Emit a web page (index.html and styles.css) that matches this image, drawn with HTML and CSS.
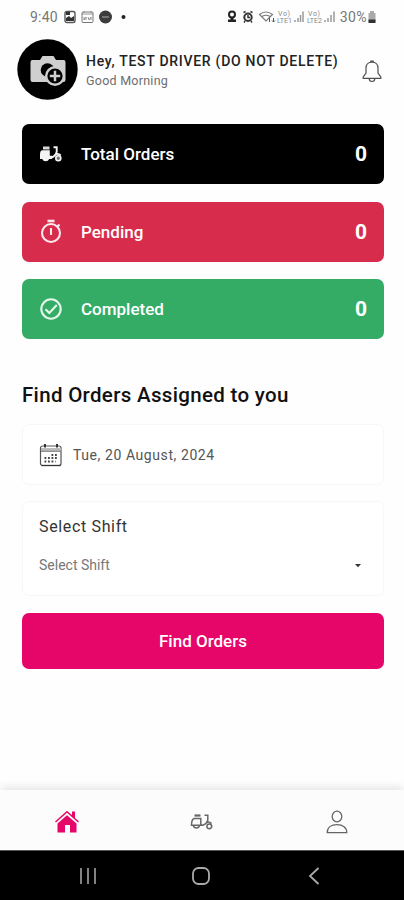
FILE: index.html
```html
<!DOCTYPE html>
<html lang="en">
<head>
<meta charset="utf-8">
<meta name="viewport" content="width=device-width, initial-scale=1">
<title>Driver Orders</title>
<link rel="stylesheet" href="styles.css">
</head>
<body>
<div class="phone">
  <div class="status">
    <span class="clock">9:40</span>
    <svg class="status-left" width="66" height="16" viewBox="0 0 66 16">
      <rect x="1" y="2.500" width="10" height="11" rx="2" fill="none" stroke="#555" stroke-width="1.400"/>
      <path d="M2 12V9l3-2 2 2 3-2v5zM2 3h4v3H2z" fill="#333"/>
      <rect x="18" y="3" width="11" height="10.500" rx="1" fill="none" stroke="#777"/>
      <path d="M18 5h11M20 8v3l2-3v3M24 8l1 3 2-3v3M20 2v2M27 2v2" fill="none" stroke="#888" stroke-width=".9"/>
      <circle cx="41.500" cy="8" r="6.500" fill="#3c3c3c"/>
      <path d="M38 8h7" stroke="#888" stroke-width="1.500"/>
      <circle cx="59.500" cy="8" r="2" fill="#222"/>
    </svg>
    <div class="status-right">
      <svg width="110" height="18" viewBox="0 0 110 18">
        <circle cx="5" cy="6.500" r="3" fill="none" stroke="#222" stroke-width="2"/>
        <path d="M1 11.500h8v2.500H1zM3.500 9.500h3v3h-3z" fill="#222"/>
        <circle cx="21" cy="9.200" r="3.700" fill="none" stroke="#333" stroke-width="2"/>
        <path d="M16.500 4.500l2-1M25.500 4.500l-2-1M18 13l-1 1.500M24 13l1 1.500M21 7v2.500h2" fill="none" stroke="#333" stroke-width="1.500"/>
        <path d="M32.500 6.500q6.500-5 13 0l-6.500 6.500zM35 8.500q4-2.500 8 0" fill="none" stroke="#777" stroke-width="1.100"/>
        <path d="M42.500 10v4M46.500 10v4M45 12.500l1.500 1.500 1.500-1.500" fill="none" stroke="#555"/>
        <g class="volte"><text x="51" y="8" textLength="12">Vo)</text><text x="50" y="15" textLength="15" lengthAdjust="spacingAndGlyphs">LTE1</text><text x="81" y="8" textLength="12">Vo)</text><text x="80" y="15" textLength="15" lengthAdjust="spacingAndGlyphs">LTE2</text></g>
        <path d="M68 12v2M71 10v4M73.500 7v7M76 3.500V14M98 12v2M101 10v4M104 7v7M107 3.500V14" stroke="#999" stroke-width="1.500"/>
      </svg>
      <span class="battery">30%</span>
      <svg width="10" height="14" viewBox="0 0 10 14"><path d="M3 1h4v2h1.500v9h-7V3H3z" fill="#aaa"/><path d="M1.500 9.500h7V13h-7z" fill="#333"/></svg>
    </div>
  </div>

  <header class="header">
    <svg class="avatar" width="61" height="61" viewBox="0 0 61 61">
      <circle cx="30.500" cy="30.500" r="30.200" fill="#000"/>
      <path d="M15.500 21H23l2.500-4h11l2.500 4h7.500q2 0 2 2v18q0 2-2 2h-31q-2 0-2-2V23q0-2 2-2z" fill="#cfcfcf"/>
      <circle cx="30.500" cy="31" r="6.800" fill="#000"/>
      <circle cx="38" cy="37" r="10" fill="#cfcfcf"/>
      <circle cx="38" cy="37" r="7.600" fill="#000"/>
      <path d="M38 31.800v10.400M32.800 37h10.400" stroke="#cfcfcf" stroke-width="2.500"/>
    </svg>
    <div class="greeting"><h1>Hey, TEST DRIVER (DO NOT DELETE)</h1><p>Good Morning</p></div>
    <svg class="bell" width="20" height="23" viewBox="0 0 20 23" fill="none" stroke="#505050" stroke-width="1.200">
      <path d="M10 2.200C6 2.200 4 5 4 8v5L1.200 17v1.300h17.600V17L16 13V8c0-3-2-5.800-6-5.800zM8.800 2V1h2.400v1M7.200 18.500q0 3 2.800 3t2.800-3"/>
    </svg>
  </header>

  <main class="main">
    <section class="stats">
      <div class="stat total">
        <svg width="24" height="24" viewBox="0 0 24 24">
          <path d="M4 4.500h6.500v3H4z" fill="#d8d8d8"/>
          <path d="M3.500 8.200h7.300v5.600H13V17h-2.800a3.800 3.800 0 0 1-7 0H1v-4.500q0-4.300 2.500-4.300z" fill="#f4f4f4"/>
          <path d="M14.500 5.200h3.200v4.600q-1 4.200-5.200 5.800M15 13.800q3.500-3.600 6.700-.3" fill="none" stroke="#f4f4f4" stroke-width="1.900"/>
          <circle cx="19.300" cy="16.300" r="2.500" fill="#777" stroke="#f4f4f4" stroke-width="1.600"/>
        </svg>
        <span>Total Orders</span><b>0</b>
      </div>
      <div class="stat pending">
        <svg width="24" height="26" viewBox="0 0 24 26" fill="none" stroke="#fbe9ed" stroke-width="2.100">
          <circle cx="12" cy="14" r="9"/><path d="M8.500 2h7" stroke-width="2.600"/><path d="M12 9v7M18.500 7.500l2-2"/>
        </svg>
        <span>Pending</span><b>0</b>
      </div>
      <div class="stat completed">
        <svg width="24" height="24" viewBox="0 0 24 24" fill="none" stroke="#e3f8ea" stroke-width="2.100"><circle cx="12" cy="12" r="9.700"/><path d="M6.500 12.300l3.800 3.700 7.500-8"/></svg>
        <span>Completed</span><b>0</b>
      </div>
    </section>

    <h2>Find Orders Assigned to you</h2>
    <div class="field date">
      <svg width="24" height="24" viewBox="0 0 24 24">
        <rect x="1.500" y="3" width="20.500" height="19.500" rx="2" fill="#fff" stroke="#555" stroke-width="1.200"/>
        <path d="M2 5h20v3H2z" fill="#bbb"/><path d="M2 8.300h20" stroke="#777"/>
        <path d="M6 1v3.500M18 1v3.500" stroke="#333" stroke-width="2"/>
        <path d="M2.500 22.500h19" stroke="#333" stroke-width="1.300"/>
        <path d="M12.500 12h7M5.500 15h14M5.500 18.500h11" stroke="#444" stroke-width="1.800" stroke-dasharray="1.800 1.700"/>
      </svg>
      <span>Tue, 20 August, 2024</span>
    </div>
    <div class="field shift">
      <label>Select Shift</label>
      <div class="select"><span>Select Shift</span><svg width="8" height="5" viewBox="0 0 8 5"><path d="M1 1h6L4 4.200z" fill="#333"/></svg></div>
    </div>
    <button class="find">Find Orders</button>
  </main>

  <nav class="tabs">
    <div><svg width="26" height="26" viewBox="0 0 26 26" fill="#e60568">
      <path d="M13 6.200l9.500 8.300v9H16v-7.500h-5v7.500H3.500v-9zM18 2.500h3v7l-3-2.600z"/><path d="M1.500 13L13 2.800 24.500 13" fill="none" stroke="#e60568" stroke-width="1.500"/>
    </svg></div>
    <div><svg width="24" height="24" viewBox="0 0 24 24" fill="none" stroke="#666" stroke-width="1.500">
      <path d="M4.500 5.500h6" stroke-width="2.200"/><path d="M4 8.500h6.800v5.300q0 1.500 2 1.500 4-1.500 5-5.300V5.200h-3.300M4 8.500Q1.500 9.500 1.500 15.300h11M3.300 15.500a3.200 3.200 0 0 0 6.200 0M15.200 13.800q3.200-3.300 6.300-.2"/><circle cx="19.300" cy="16.300" r="2.400"/>
    </svg></div>
    <div><svg width="24" height="26" viewBox="0 0 24 26" fill="none" stroke="#666" stroke-width="1.300"><ellipse cx="12" cy="7.500" rx="4.800" ry="5.300"/><path d="M2.200 23.700c0-5 4-8 9.800-8s9.800 3 9.800 8z"/></svg></div>
  </nav>
  <footer class="system">
    <div><svg width="18" height="18" viewBox="0 0 18 18"><path d="M2 1v16M9 1v16M16 1v16" stroke="#999" stroke-width="1.700"/></svg></div>
    <div><svg width="20" height="20" viewBox="0 0 20 20"><rect x="2" y="2" width="16" height="16" rx="5.500" fill="none" stroke="#aaa" stroke-width="1.800"/></svg></div>
    <div><svg width="14" height="20" viewBox="0 0 14 20"><path d="M11.500 2L3 10l8.500 8" fill="none" stroke="#aaa" stroke-width="1.800"/></svg></div>
  </footer>
</div>
</body>
</html>
```
FILE: styles.css
```css
* { box-sizing: border-box; }
body { margin: 0; background: #fefefe; font-family: Roboto, "Liberation Sans", sans-serif; color: #111; }
h1, h2, p { margin: 0; }
svg { display: block; flex: none; }
.phone { width: 404px; height: 900px; display: flex; flex-direction: column; overflow: hidden; }

.status { height: 34px; padding: 0 27px 0 30px; display: flex; align-items: center; color: #777; font-size: 14px; white-space: nowrap; }
.clock { width: 34px; letter-spacing: .2px; }
.status-right { margin-left: auto; display: flex; align-items: center; }
.battery { margin: 0 0 0 3px; font-size: 14px; letter-spacing: .4px; }
.volte text { font-size: 7px; fill: #888; }

.header { height: 90px; padding: 5px 22px 0 17px; display: flex; align-items: flex-start; }
.greeting { margin: 13px 0 0 8px; white-space: nowrap; }
.greeting h1 { font-size: 14px; line-height: 18px; font-weight: 500; letter-spacing: .72px; color: #222; }
.greeting p { margin-top: 3px; font-size: 12.5px; line-height: 16px; letter-spacing: .25px; color: #6d6d6d; }
.bell { margin: 21px 0 0 auto; }

.main { flex: 1; padding: 0 20px 0 22px; display: flex; flex-direction: column; }
.stats { display: flex; flex-direction: column; gap: 17.5px; }
.stat { height: 60px; border-radius: 7px; padding: 0 17px; display: flex; align-items: center; color: #fff; }
.stat span { margin-left: 18px; font-size: 17px; font-weight: 500; }
.stat b { margin-left: auto; font-size: 21px; font-weight: 700; }
.total { background: #000; }
.pending { background: #d72c4b; }
.completed { background: #35ac66; }
.main h2 { margin: 44px 0 17px; font-size: 20.5px; line-height: 24px; font-weight: 500; letter-spacing: .32px; white-space: nowrap; }
.field { border: 1px solid #f7f7f7; border-radius: 7px; background: #fff; }
.date { height: 61px; padding-left: 16px; display: flex; align-items: center; }
.date span { margin-left: 10px; font-size: 14px; letter-spacing: .58px; color: #555; }
.shift { margin-top: 16px; height: 95px; padding: 15px 21px 0 16px; }
.shift label { display: block; font-size: 16px; line-height: 20px; letter-spacing: .65px; color: #333; }
.select { margin-top: 19px; display: flex; align-items: center; justify-content: space-between; font-size: 14px; line-height: 18px; color: #777; }
.find { margin-top: 17px; height: 56px; border: 0; border-radius: 7px; background: #e60568; color: #fff; font: 500 17px Roboto, sans-serif; }

.tabs { height: 60px; padding-top: 3px; display: grid; grid-template-columns: repeat(3, 1fr); align-items: center; background: #fcfcfc; box-shadow: 0 -4px 8px -1px rgba(0, 0, 0, .1); }
.tabs div { display: flex; justify-content: center; }
.system { height: 50px; padding: 0 33px 0 31px; display: grid; grid-template-columns: repeat(3, 1fr); align-items: center; background: #000; border-top: 1px solid #555; }
.system div { display: flex; justify-content: center; }
```
